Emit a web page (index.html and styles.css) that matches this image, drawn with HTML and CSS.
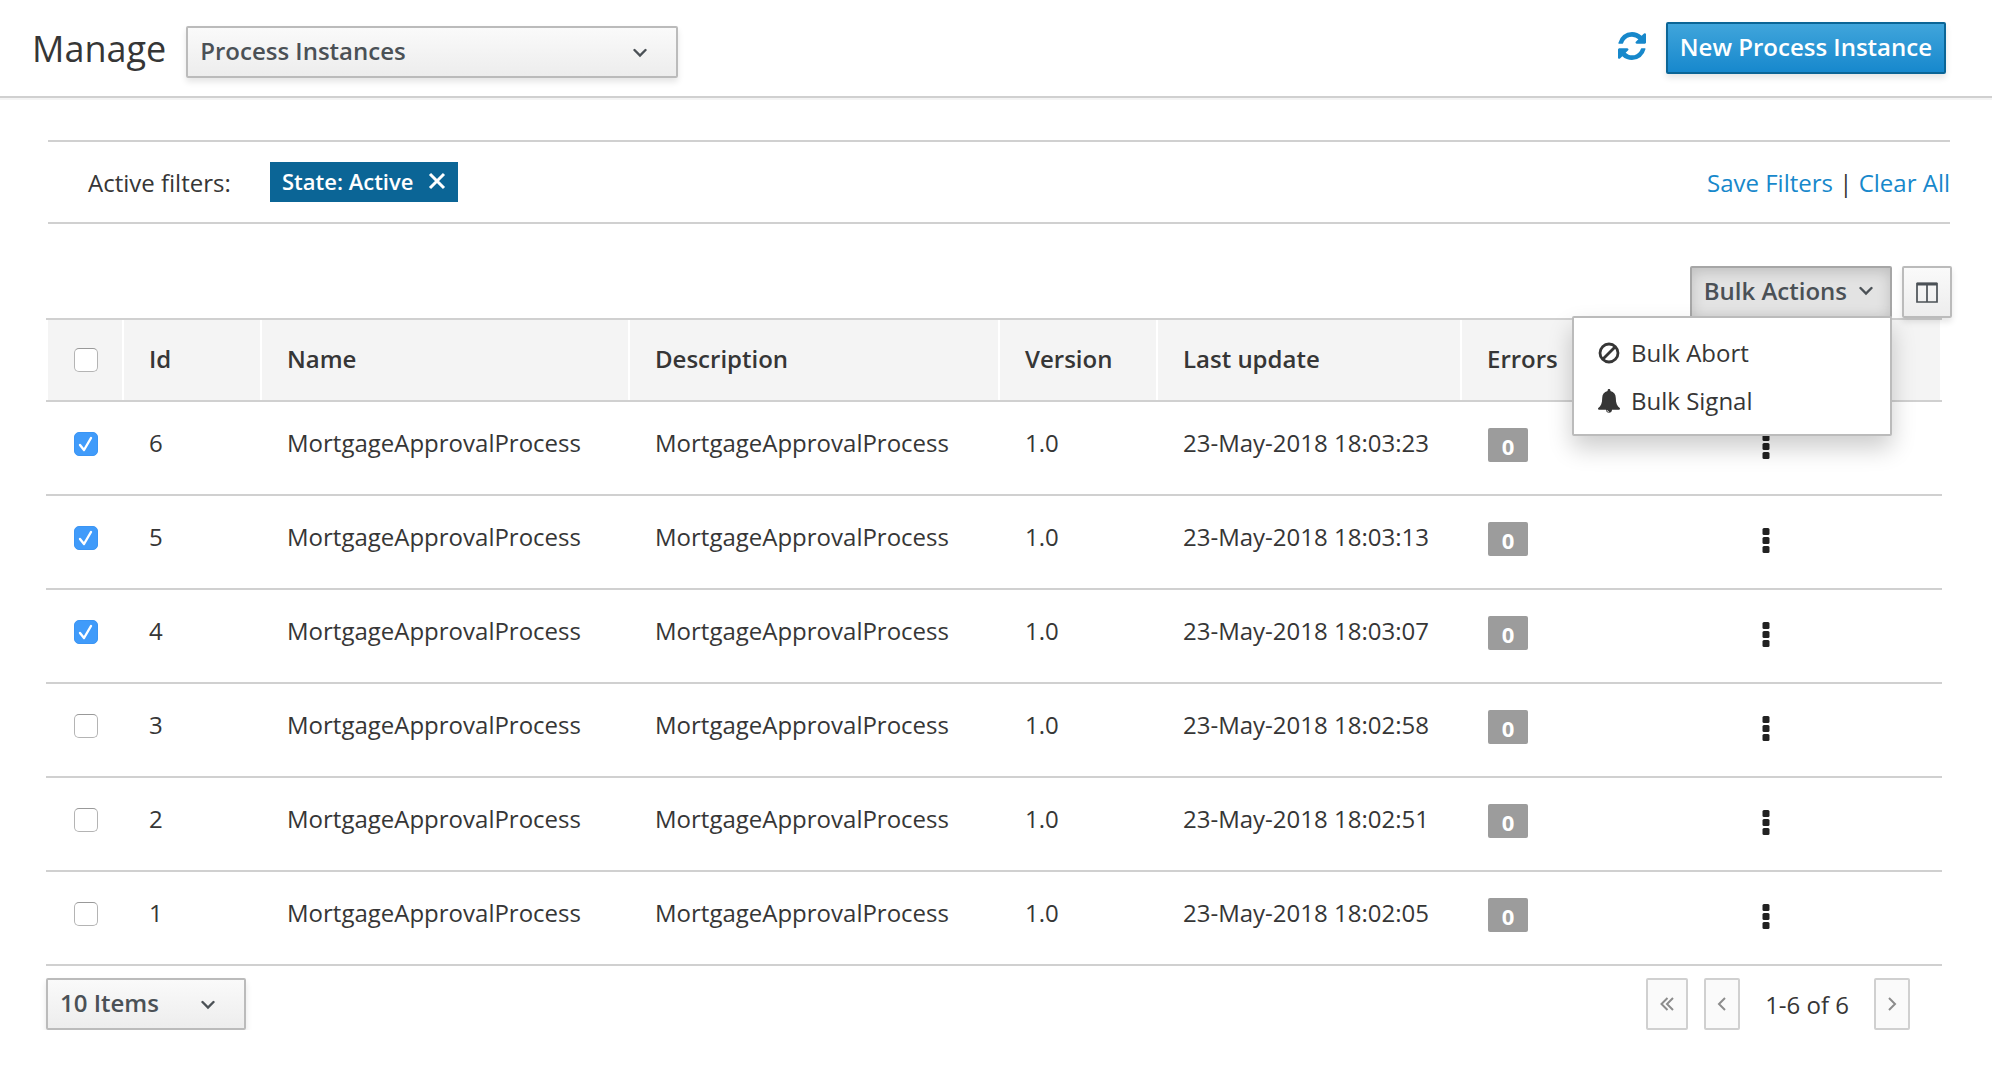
FILE: index.html
```html
<!DOCTYPE html>
<html lang="en">
<head>
<meta charset="utf-8">
<title>Manage Process Instances</title>
<link rel="stylesheet" href="styles.css">
</head>
<body>
<svg class="sprite" aria-hidden="true">
  <symbol id="chevron" viewBox="0 0 14 10"><path d="M1.5 2 7 7.5 12.5 2" fill="none" stroke="currentColor" stroke-width="2.4" stroke-linecap="round" stroke-linejoin="miter"/></symbol>
  <symbol id="kebab" viewBox="0 0 8 25"><rect x="0.5" y="0" width="7" height="7" rx="1.5"/><rect x="0.5" y="9" width="7" height="7" rx="1.5"/><rect x="0.5" y="18" width="7" height="7" rx="1.5"/></symbol>
</svg>

<header class="header">
  <h1 class="title"><label for="view">Manage</label></h1>
  <div class="select view-select">
    <select id="view"><option>Process Instances</option></select>
    <svg class="chevron"><use href="#chevron"/></svg>
  </div>
  <div class="header-actions">
    <button class="refresh" type="button" aria-label="Refresh">
      <svg viewBox="0 0 1536 1536" width="28" height="28"><path fill="currentColor" d="M1511 928q0 5-1 7-64 268-268 434.500T764 1536q-146 0-282.500-55T238 1324l-129 129q-19 19-45 19t-45-19-19-45V960q0-26 19-45t45-19h448q26 0 45 19t19 45-19 45l-137 137q71 66 161 102t187 36q134 0 250-65t186-179q11-17 53-117 8-23 30-23h192q13 0 22.500 9.500t9.500 22.500zM1536 128v448q0 26-19 45t-45 19h-448q-26 0-45-19t-19-45 19-45l138-138Q969 256 768 256q-134 0-250 65T332 500q-11 17-53 117-8 23-30 23H50q-13 0-22.500-9.500T18 608v-7q65-268 270-434.500T768 0q146 0 284 55.500T1297 212l130-129q19-19 45-19t45 19 19 45z"/></svg>
    </button>
    <button class="btn btn-primary" type="button">New Process Instance</button>
  </div>
</header>

<main class="content">
  <section class="filters">
    <span class="filters-label">Active filters:</span>
    <span class="tag">State: Active
      <button type="button" aria-label="Remove filter"><svg viewBox="0 0 18 18" width="18" height="18"><path d="M2 2 16 16M16 2 2 16" stroke="currentColor" stroke-width="3"/></svg></button>
    </span>
    <div class="filter-links"><a href="#save">Save Filters</a> | <a href="#clear">Clear All</a></div>
  </section>

  <div class="toolbar">
    <div class="dropdown">
      <button class="btn btn-open" type="button" aria-expanded="true">Bulk Actions <svg class="chevron"><use href="#chevron"/></svg></button>
      <ul class="menu">
        <li><a href="#abort"><svg viewBox="0 0 22 22" width="22" height="22"><circle cx="11" cy="11" r="9" fill="none" stroke="currentColor" stroke-width="2.8"/><path d="M17 5 5 17" stroke="currentColor" stroke-width="2.8"/></svg>Bulk Abort</a></li>
        <li><a href="#signal"><svg viewBox="0 0 22 24" width="22" height="24"><path fill="currentColor" d="M11 0c-.9 0-1.500.7-1.400 1.500v.5C6 2.800 4.200 5.500 4.200 9c0 5-1.200 8-4.200 10.200 0 1 .6 1.500 1.400 1.500H8c0 1.800 1.300 3 3 3s3-1.200 3-3h6.600c.8 0 1.400-.5 1.400-1.500C19 17 17.800 14 17.800 9c0-3.500-1.800-6.200-5.400-7v-.5C12.500.7 11.900 0 11 0z"/><path d="M9 21q.3 1.700 2 1.800" fill="none" stroke="#fff" stroke-width=".7"/></svg>Bulk Signal</a></li>
      </ul>
    </div>
    <button class="btn columns" type="button" aria-label="Columns"><svg viewBox="0 0 22 21" width="22" height="21"><path fill="none" stroke="currentColor" stroke-width="1.700" d="M1 1.500h20v18.500H1zM11 2v18"/><path d="M1 2h20" stroke="currentColor" stroke-width="3"/></svg></button>
  </div>

  <table class="grid">
    <colgroup><col class="c-check"><col class="c-id"><col class="c-name"><col class="c-desc"><col class="c-version"><col class="c-update"><col class="c-errors"><col></colgroup>
    <thead>
      <tr><th class="check"><input type="checkbox" aria-label="Select all"></th><th>Id</th><th>Name</th><th>Description</th><th>Version</th><th>Last update</th><th>Errors</th><th class="plain"></th></tr>
    </thead>
    <tbody>
      <tr><td class="check"><input type="checkbox" aria-label="Select 6" checked></td><td>6</td><td>MortgageApprovalProcess</td><td>MortgageApprovalProcess</td><td>1.0</td><td>23-May-2018 18:03:23</td><td><span class="badge">0</span></td><td class="actions"><button type="button" aria-label="Actions"><svg><use href="#kebab"/></svg></button></td></tr>
      <tr><td class="check"><input type="checkbox" aria-label="Select 5" checked></td><td>5</td><td>MortgageApprovalProcess</td><td>MortgageApprovalProcess</td><td>1.0</td><td>23-May-2018 18:03:13</td><td><span class="badge">0</span></td><td class="actions"><button type="button" aria-label="Actions"><svg><use href="#kebab"/></svg></button></td></tr>
      <tr><td class="check"><input type="checkbox" aria-label="Select 4" checked></td><td>4</td><td>MortgageApprovalProcess</td><td>MortgageApprovalProcess</td><td>1.0</td><td>23-May-2018 18:03:07</td><td><span class="badge">0</span></td><td class="actions"><button type="button" aria-label="Actions"><svg><use href="#kebab"/></svg></button></td></tr>
      <tr><td class="check"><input type="checkbox" aria-label="Select 3"></td><td>3</td><td>MortgageApprovalProcess</td><td>MortgageApprovalProcess</td><td>1.0</td><td>23-May-2018 18:02:58</td><td><span class="badge">0</span></td><td class="actions"><button type="button" aria-label="Actions"><svg><use href="#kebab"/></svg></button></td></tr>
      <tr><td class="check"><input type="checkbox" aria-label="Select 2"></td><td>2</td><td>MortgageApprovalProcess</td><td>MortgageApprovalProcess</td><td>1.0</td><td>23-May-2018 18:02:51</td><td><span class="badge">0</span></td><td class="actions"><button type="button" aria-label="Actions"><svg><use href="#kebab"/></svg></button></td></tr>
      <tr><td class="check"><input type="checkbox" aria-label="Select 1"></td><td>1</td><td>MortgageApprovalProcess</td><td>MortgageApprovalProcess</td><td>1.0</td><td>23-May-2018 18:02:05</td><td><span class="badge">0</span></td><td class="actions"><button type="button" aria-label="Actions"><svg><use href="#kebab"/></svg></button></td></tr>
    </tbody>
  </table>

  <footer class="footer">
    <div class="select size-select">
      <select aria-label="Items per page"><option>10 Items</option></select>
      <svg class="chevron"><use href="#chevron"/></svg>
    </div>
    <nav class="pager" aria-label="Pages">
      <button class="first" type="button" aria-label="First page"><svg viewBox="0 0 14 14" width="14" height="14"><path d="M7.500 1 1.500 7l6 6M13 1 7 7l6 6"/></svg></button>
      <button type="button" aria-label="Previous page"><svg viewBox="0 0 14 14" width="14" height="14"><path d="M10 1 4 7l6 6"/></svg></button>
      <span class="range">1-6 of 6</span>
      <button type="button" aria-label="Next page"><svg viewBox="0 0 14 14" width="14" height="14"><path d="M4 1l6 6-6 6"/></svg></button>
    </nav>
  </footer>
</main>
</body>
</html>
```
FILE: styles.css
```css
* { box-sizing: border-box; }
body {
  margin: 0;
  background: #fff;
  color: #363636;
  font: 24px/32px "Open Sans", "Noto Sans", sans-serif;
}
button, select { font: inherit; color: inherit; }
button { cursor: pointer; }
a { color: #1788cb; text-decoration: none; }
.sprite { display: none; }
.chevron { width: 14px; height: 10px; flex: none; }

/* Header */
.header {
  display: flex;
  align-items: flex-start;
  padding: 22px 46px 18px 32px;
  border-bottom: 2px solid #d0d0d0;
  box-shadow: 0 2px 0 #f4f4f4;
}
.title { margin: 0; font-size: 36px; line-height: 54px; font-weight: 400; }
.header-actions { display: flex; align-items: center; margin-left: auto; }
.refresh {
  display: flex;
  margin: 0 20px 4px 0;
  padding: 0;
  border: 0;
  background: none;
  color: #1788cb;
}

/* Controls */
.btn, .select select {
  height: 52px;
  border: 2px solid #bbb;
  border-radius: 2px;
  background: linear-gradient(#fafafa, #ededed);
  box-shadow: 0 4px 6px rgba(3, 3, 3, .1);
  color: #4b5156;
  font-weight: 600;
}
.btn { padding: 0 12px 2px; white-space: nowrap; }
.btn-primary {
  border-color: #0b6596;
  background: linear-gradient(#40a5db, #1788cd);
  color: #fff;
}
.select { display: grid; align-items: center; }
.select > * { grid-area: 1 / 1; }
.select select {
  width: 100%;
  padding: 0 40px 2px 12px;
  appearance: none;
}
.select .chevron {
  justify-self: end;
  margin: 2px 31px 0 0;
  color: #4b5156;
  pointer-events: none;
}
.view-select { width: 492px; margin: 4px 0 0 20px; }
.size-select { width: 200px; }

/* Filters */
.content { padding: 42px 40px 0 46px; }
.filters {
  display: flex;
  align-items: center;
  height: 84px;
  margin: 0 2px;
  padding-left: 40px;
  border: solid #d0d0d0;
  border-width: 2px 0;
}
.filters-label { width: 182px; padding-top: 2px; }
.tag {
  display: flex;
  align-items: center;
  height: 40px;
  padding: 0 12px 2px;
  background: #0b6596;
  color: #fff;
  font-size: 22px;
  font-weight: 600;
}
.tag button {
  display: flex;
  margin-left: 15px;
  padding: 0;
  border: 0;
  background: none;
}
.filter-links { margin-left: auto; padding-top: 2px; }

/* Toolbar */
.toolbar { display: flex; justify-content: flex-end; gap: 10px; margin-top: 42px; }
.dropdown { position: relative; }
.btn-open {
  display: flex;
  align-items: center;
  gap: 12px;
  padding-right: 17px;
  border-color: #a6a6a6;
  background: #e3e3e3;
  box-shadow: inset 0 4px 14px rgba(3, 3, 3, .16);
}
.columns { display: grid; place-items: center; width: 50px; padding: 0; }
.menu {
  position: absolute;
  top: 50px;
  right: 0;
  z-index: 1;
  width: 320px;
  margin: 0;
  padding: 10px 0;
  border: 2px solid #bbb;
  border-radius: 2px;
  background: #fff;
  box-shadow: 0 12px 24px rgba(0, 0, 0, .2);
  list-style: none;
}
.menu a {
  display: flex;
  align-items: center;
  gap: 11px;
  height: 48px;
  padding: 2px 24px 0;
  color: #363636;
}

/* Table */
.grid {
  width: calc(100% - 10px);
  table-layout: fixed;
  border-spacing: 0;
}
.c-check { width: 76px; }
.c-id { width: 138px; }
.c-name { width: 368px; }
.c-desc { width: 370px; }
.c-version { width: 158px; }
.c-update { width: 304px; }
.c-errors { width: 130px; }
th, td {
  padding: 0 0 0 27px;
  border-bottom: 2px solid #d0d0d0;
  text-align: left;
  white-space: nowrap;
}
th {
  height: 84px;
  padding-bottom: 2px;
  border-top: 2px solid #d0d0d0;
  background: #f4f4f4;
  box-shadow: inset 2px 0 #fff;
  font-weight: 600;
}
th.plain { box-shadow: inset -2px 0 #fff; }
td { height: 94px; padding-bottom: 10px; }
th.check { padding: 0 0 0 28px; }
td.check { padding: 0 0 8px 28px; }
.check input {
  display: block;
  width: 24px;
  height: 24px;
  margin: 0;
  border: 1px solid #b4b4b4;
  border-top-color: #999;
  border-radius: 5px;
  background: #fff;
  appearance: none;
}
.check input:checked {
  border-color: #3b95f4;
  background: #409bfa url("data:image/svg+xml,%3Csvg xmlns='http://www.w3.org/2000/svg' viewBox='0 0 22 22'%3E%3Cpath d='M5 12l4 5 7-12' fill='none' stroke='white' stroke-width='2.400' stroke-linecap='round' stroke-linejoin='round'/%3E%3C/svg%3E");
}
.badge {
  display: block;
  width: 40px;
  height: 34px;
  margin: 4px 0 0 1px;
  border-radius: 2px;
  background: #9c9c9c;
  color: #fff;
  font-size: 22px;
  line-height: 36px;
  font-weight: 700;
  text-align: center;
}
td.actions { padding: 4px 0 0; text-align: center; }
.actions button { padding: 0; border: 0; background: none; color: #222; }
.actions svg { display: block; width: 8px; height: 25px; fill: currentColor; }

/* Footer */
.footer { display: flex; justify-content: space-between; margin: 12px 42px 0 0; }
.pager { display: flex; align-items: center; }
.pager button {
  display: grid;
  place-items: center;
  width: 36px;
  height: 52px;
  padding: 0;
  border: 2px solid #d0d0d0;
  border-radius: 2px;
  background: #fafafa;
  color: #8c8c8c;
}
.pager .first { width: 42px; margin-right: 16px; }
.pager path { fill: none; stroke: currentColor; stroke-width: 2; }
.range { margin: 0 25px; padding-top: 2px; }
```
